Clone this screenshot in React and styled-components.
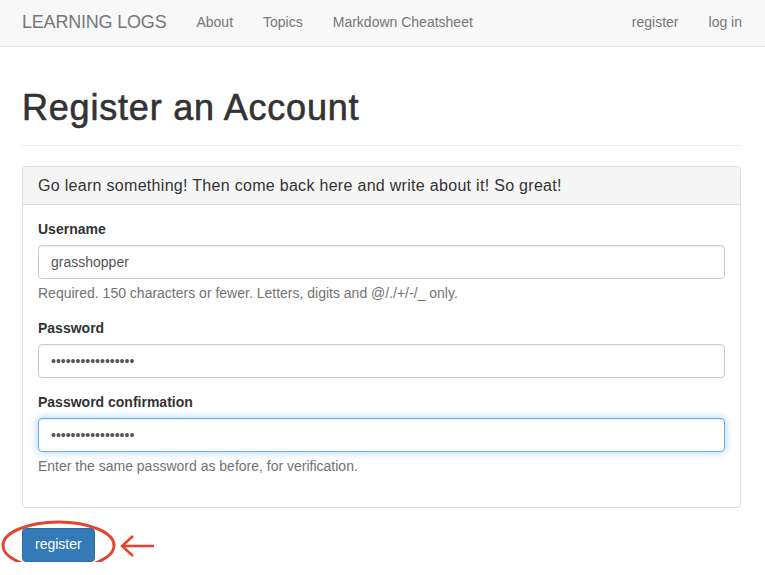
import React from "react";
import styled, { createGlobalStyle, css } from "styled-components";

const GlobalStyle = createGlobalStyle`
  * { box-sizing: border-box; }
  html, body { margin: 0; padding: 0; }
  body {
    font-family: "Liberation Sans", Helvetica, Arial, sans-serif;
    font-size: 14px;
    line-height: 1.42857;
    color: #333;
    background: #fff;
  }
`;

const Navbar = styled.nav`
  display: flex;
  align-items: center;
  height: 47px;
  padding: 0 23px 1px 22px;
  background: #f8f8f8;
  border-bottom: 1px solid #e7e7e7;
`;

const Brand = styled.a`
  font-size: 18px;
  color: #777;
  text-decoration: none;
  margin-right: 30px;
  letter-spacing: -0.2px;
`;

const NavList = styled.ul`
  display: flex;
  gap: 30px;
  list-style: none;
  margin: 0;
  padding: 0;
  margin-left: ${(p) => (p.$right ? "auto" : "0")};
`;

const NavLink = styled.a`
  color: #777;
  text-decoration: none;
  font-size: 14px;
`;

const Container = styled.main`
  padding: 0 24px 0 22px;
`;

const PageHeader = styled.div`
  margin-top: 41px;
  padding-bottom: 17px;
  border-bottom: 1px solid #eee;
`;

const Title = styled.h1`
  margin: 0;
  font-size: 36px;
  line-height: 1.1;
  font-weight: 500;
  letter-spacing: 0.8px;
  -webkit-text-stroke: 0.6px #333;
  color: #333;
`;

const Panel = styled.section`
  margin-top: 20px;
  margin-bottom: 20px;
  border: 1px solid #ddd;
  border-radius: 4px;
  background: #fff;
`;

const PanelHeading = styled.div`
  padding: 10px 15px;
  background: #f5f5f5;
  border-bottom: 1px solid #ddd;
  border-radius: 3px 3px 0 0;
  font-size: 16px;
  line-height: 1.1;
  letter-spacing: 0.3px;
  color: #333;
`;

const PanelBody = styled.div`
  padding: 15px;
`;

const FormGroup = styled.div`
  margin-bottom: 15px;
`;

const Label = styled.label`
  display: block;
  font-weight: bold;
  margin-bottom: 5px;
`;

const Input = styled.input`
  display: block;
  width: 100%;
  height: 34px;
  padding: 6px 12px;
  font-family: inherit;
  font-size: 14px;
  line-height: 1.42857;
  color: #555;
  background: #fff;
  border: 1px solid #ccc;
  border-radius: 4px;
  box-shadow: inset 0 1px 1px rgba(0, 0, 0, 0.075);
  outline: none;
  ${(p) =>
    p.$focused &&
    css`
      border-color: #66afe9;
      box-shadow: inset 0 1px 1px rgba(0, 0, 0, 0.075),
        0 0 8px rgba(102, 175, 233, 0.6);
    `}
`;

const Help = styled.span`
  display: block;
  margin: 5px 0 10px;
  color: #737373;
`;

const ButtonRow = styled.div`
  position: relative;
`;

const Button = styled.button`
  display: inline-block;
  padding: 6px 12px;
  font-family: inherit;
  font-size: 14px;
  line-height: 1.42857;
  color: #fff;
  background: #337ab7;
  border: 1px solid #2e6da4;
  border-radius: 4px;
  cursor: pointer;
`;

const Annotation = styled.svg`
  position: absolute;
  left: -22px;
  top: -8px;
  pointer-events: none;
`;

export default function App() {
  return (
    <>
      <GlobalStyle />
      <Navbar>
        <Brand href="#">LEARNING LOGS</Brand>
        <NavList>
          <li><NavLink href="#">About</NavLink></li>
          <li><NavLink href="#">Topics</NavLink></li>
          <li><NavLink href="#">Markdown Cheatsheet</NavLink></li>
        </NavList>
        <NavList $right>
          <li><NavLink href="#">register</NavLink></li>
          <li><NavLink href="#">log in</NavLink></li>
        </NavList>
      </Navbar>
      <Container>
        <PageHeader>
          <Title>Register an Account</Title>
        </PageHeader>
        <Panel>
          <PanelHeading>
            Go learn something! Then come back here and write about it! So great!
          </PanelHeading>
          <PanelBody>
            <FormGroup>
              <Label>Username</Label>
              <Input type="text" value="grasshopper" readOnly />
              <Help>Required. 150 characters or fewer. Letters, digits and @/./+/-/_ only.</Help>
            </FormGroup>
            <FormGroup>
              <Label>Password</Label>
              <Input type="password" value="abcdefghijklmnopq" readOnly />
            </FormGroup>
            <FormGroup>
              <Label>Password confirmation</Label>
              <Input type="password" value="abcdefghijklmnopq" readOnly $focused />
              <Help>Enter the same password as before, for verification.</Help>
            </FormGroup>
          </PanelBody>
        </Panel>
        <ButtonRow>
          <Button type="button">register</Button>
          <Annotation width="170" height="54" viewBox="0 0 170 54">
            <ellipse cx="58.5" cy="25.5" rx="55.5" ry="23.5" fill="none" stroke="#e5432f" strokeWidth="3" />
            <line x1="122" y1="26" x2="154" y2="26" stroke="#e5432f" strokeWidth="2.5" />
            <polyline points="133,16 122,26 133,36" fill="none" stroke="#e5432f" strokeWidth="2.5" />
          </Annotation>
        </ButtonRow>
      </Container>
    </>
  );
}
